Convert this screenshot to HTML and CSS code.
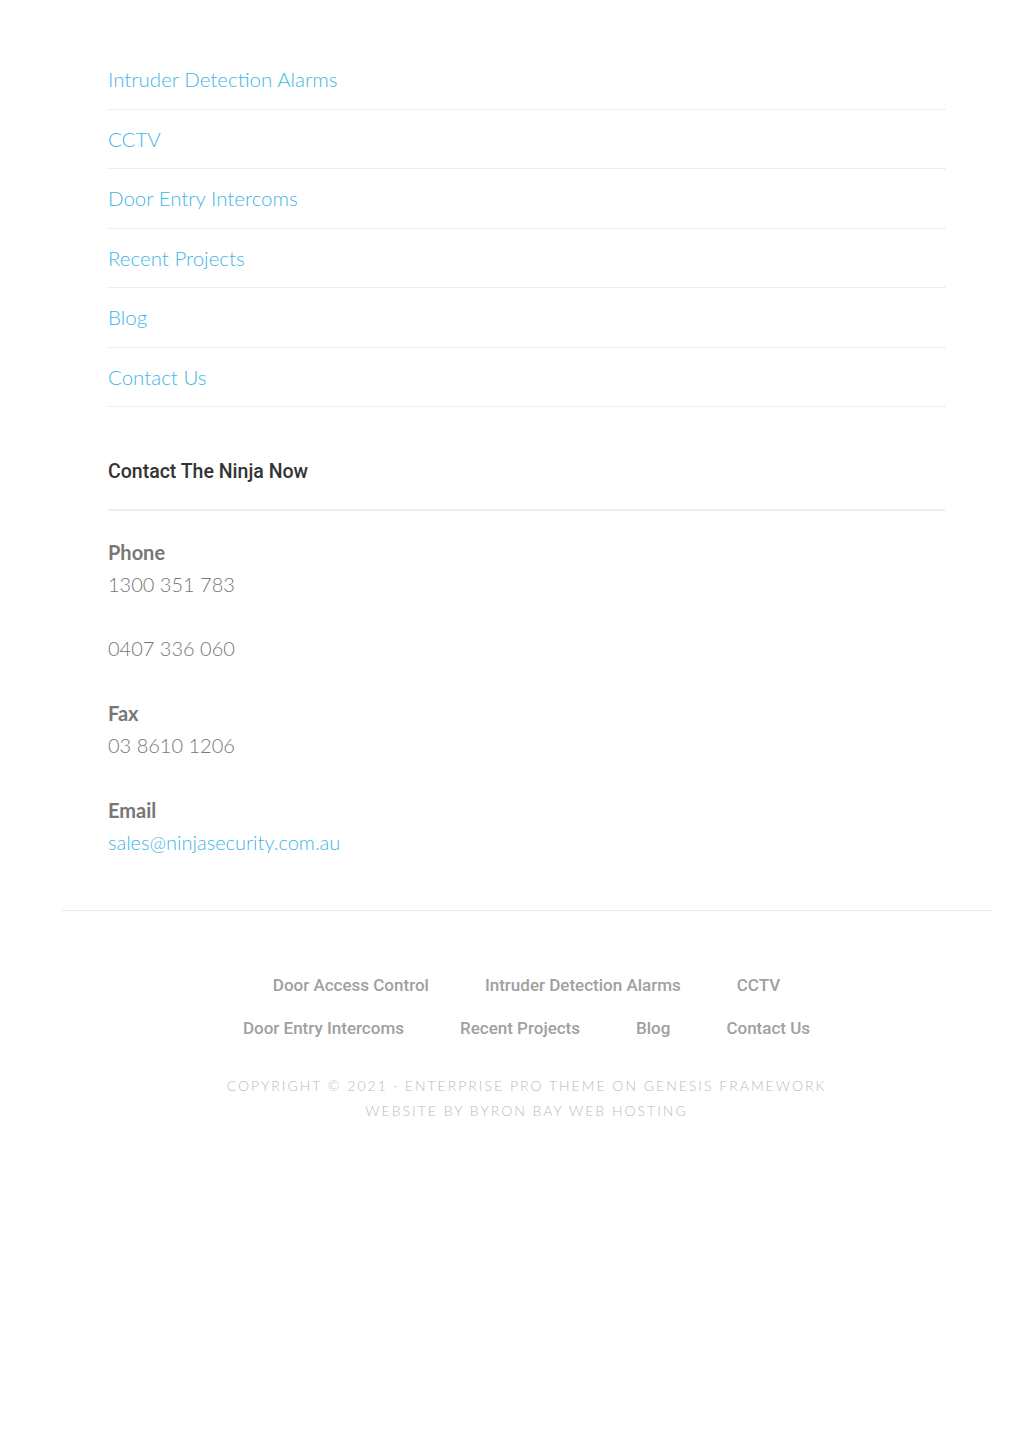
FILE: index.html
```html
<!DOCTYPE html>
<html>
    <head>
        <meta charset="UTF-8" />
        <title>Ninja Security</title>
        <link rel="stylesheet" href="styles.css">
    </head>
    <body>
        <div class="site">
            <div class="widgets">
                <ul class="menu">
                    <li><a href="#">Intruder Detection Alarms</a></li>
                    <li><a href="#">CCTV</a></li>
                    <li><a href="#">Door Entry Intercoms</a></li>
                    <li><a href="#">Recent Projects</a></li>
                    <li><a href="#">Blog</a></li>
                    <li><a href="#">Contact Us</a></li>
                </ul>

                <h4 class="widgetTitle">Contact The Ninja Now</h4>
                <div class="contact">
                    <p><strong>Phone</strong><br />1300 351 783<br /><br />0407 336 060</p>
                    <p><strong>Fax</strong><br />03 8610 1206</p>
                    <p><strong>Email</strong><br /><a href="#">sales@ninjasecurity.com.au</a></p>
                </div>
            </div>

            <footer class="footer">
                <ul class="footerNav">
                    <li><a href="#">Door Access Control</a></li>
                    <li><a href="#">Intruder Detection Alarms</a></li>
                    <li><a href="#">CCTV</a></li>
                    <li><a href="#">Door Entry Intercoms</a></li>
                    <li><a href="#">Recent Projects</a></li>
                    <li><a href="#">Blog</a></li>
                    <li><a href="#">Contact Us</a></li>
                </ul>
                <p class="credits">Copyright &copy; 2021 &middot; Enterprise Pro Theme on Genesis Framework<br />Website by Byron Bay Web Hosting</p>
            </footer>
        </div>
    </body>
</html>
```

FILE: styles.css
```css
body {
    margin: 0;
    background: #fff;
    font-family: Lato, "Liberation Sans", sans-serif;
    font-weight: 300;
    color: #777;
}
a {
    color: #3fb6e6;
    text-decoration: none;
}
.site {
    width: 929px;
    margin-left: 62px;
    padding-top: 50px;
}
.widgets {
    padding: 0 46px;
}
.menu {
    list-style: none;
    margin: 0;
    padding: 0;
}
.menu li {
    font-size: 20.5px;
    line-height: 26.5px;
    padding: 16px 0;
    border-bottom: 1px dotted #ddd;
}
.widgetTitle {
    margin: 53px 0 0;
    padding-bottom: 25px;
    border-bottom: 2px solid #eee;
    font-family: Roboto, "Liberation Sans", sans-serif;
    font-weight: 500;
    font-size: 19.5px;
    line-height: 24px;
    color: #333;
}
.contact {
    padding-top: 25px;
    font-size: 20px;
    line-height: 32px;
}
.contact p {
    margin: 0 0 33px;
}
.contact strong {
    font-weight: 700;
}
.footer {
    margin-top: 52px;
    border-top: 1px solid #e8e8e8;
    padding: 60px 0 40px;
    text-align: center;
}
.footerNav {
    list-style: none;
    margin: 0 auto;
    padding: 0;
    max-width: 720px;
    display: flex;
    flex-wrap: wrap;
    justify-content: center;
    row-gap: 15px;
}
.footerNav li {
    padding: 0 28px;
    font-family: Roboto, "Liberation Sans", sans-serif;
    font-weight: 500;
    font-size: 17px;
    line-height: 28px;
}
.footerNav a {
    color: #a0a0a0;
}
.credits {
    margin: 31px 0 0;
    font-size: 14px;
    line-height: 25px;
    letter-spacing: 2px;
    text-transform: uppercase;
    color: #bbb;
}
```
